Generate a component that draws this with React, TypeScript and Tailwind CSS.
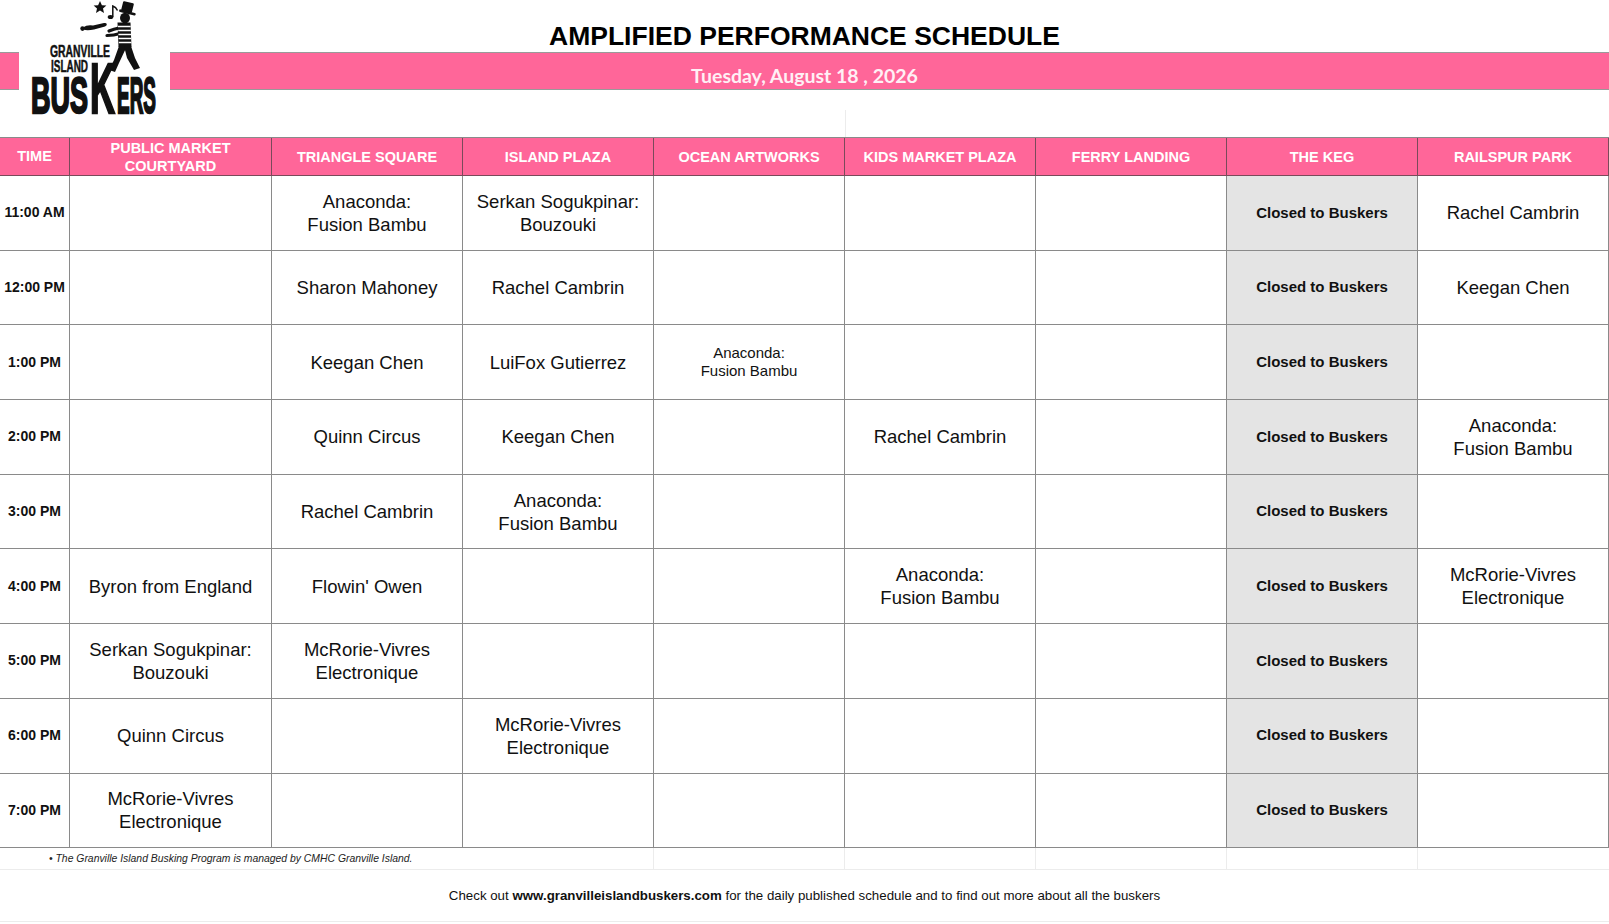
const CLOSED = "__closed__";

type Row = {
  time: string;
  cells: string[];
};

const locations = [
  "PUBLIC MARKET\nCOURTYARD",
  "TRIANGLE SQUARE",
  "ISLAND PLAZA",
  "OCEAN ARTWORKS",
  "KIDS MARKET PLAZA",
  "FERRY LANDING",
  "THE KEG",
  "RAILSPUR PARK",
];

const rows: Row[] = [
  { time: "11:00 AM", cells: ["", "Anaconda:\nFusion Bambu", "Serkan Sogukpinar:\nBouzouki", "", "", "", CLOSED, "Rachel Cambrin"] },
  { time: "12:00 PM", cells: ["", "Sharon Mahoney", "Rachel Cambrin", "", "", "", CLOSED, "Keegan Chen"] },
  { time: "1:00 PM", cells: ["", "Keegan Chen", "LuiFox Gutierrez", "small:Anaconda:\nFusion Bambu", "", "", CLOSED, ""] },
  { time: "2:00 PM", cells: ["", "Quinn Circus", "Keegan Chen", "", "Rachel Cambrin", "", CLOSED, "Anaconda:\nFusion Bambu"] },
  { time: "3:00 PM", cells: ["", "Rachel Cambrin", "Anaconda:\nFusion Bambu", "", "", "", CLOSED, ""] },
  { time: "4:00 PM", cells: ["Byron from England", "Flowin' Owen", "", "", "Anaconda:\nFusion Bambu", "", CLOSED, "McRorie-Vivres\nElectronique"] },
  { time: "5:00 PM", cells: ["Serkan Sogukpinar:\nBouzouki", "McRorie-Vivres\nElectronique", "", "", "", "", CLOSED, ""] },
  { time: "6:00 PM", cells: ["Quinn Circus", "", "McRorie-Vivres\nElectronique", "", "", "", CLOSED, ""] },
  { time: "7:00 PM", cells: ["McRorie-Vivres\nElectronique", "", "", "", "", "", CLOSED, ""] },
];

const logoFont = "'Liberation Sans', Arial, sans-serif";

function Logo() {
  // white box that breaks the pink date bar, with the juggler logo in it
  return (
    <div className="absolute left-[19px] top-0 h-[128px] w-[151px] bg-white">
      <svg width="151" height="128" viewBox="0 0 151 128" className="overflow-visible">
        <polygon
          points="81,1 82.9,5.2 87.4,5.6 84,8.5 85,13 81,10.6 77,13 78,8.5 74.6,5.6 79.1,5.2"
          fill="#111"
        />
        <ellipse cx="91.5" cy="17" rx="2.8" ry="2.1" fill="#111" />
        <path d="M93.8 17 L93.8 6 Q97 7 98.5 10.5" stroke="#111" strokeWidth="1.5" fill="none" />
        <path
          d="M64 27.5 Q68 24.5 74 25.5 L85 23 Q87.5 22.6 87.8 24.2 Q88 25.8 86 26.4 L75 29.5 Q68 31 64 29.5 Z"
          fill="#111"
        />
        <ellipse cx="63.5" cy="28.6" rx="2.2" ry="2.4" fill="#111" />
        <rect x="103" y="2" width="11" height="10" rx="1" fill="#111" transform="rotate(14 108 7)" />
        <rect x="100" y="11" width="17" height="2.6" rx="1.2" fill="#111" transform="rotate(14 108 12)" />
        <ellipse cx="106" cy="18" rx="5" ry="5.2" fill="#111" />
        <path d="M100 28 Q95 29 90 31" stroke="#111" strokeWidth="3.2" strokeLinecap="round" fill="none" />
        <path d="M101 33.5 Q95 35.5 88 35.5" stroke="#111" strokeWidth="3.2" strokeLinecap="round" fill="none" />
        <path d="M98.5 22.5 L111.5 22.5 L112.5 47 L99.5 47 Z" fill="#111" />
        <path
          d="M99 26.5 L111.7 26.5 M99.2 30.5 L111.9 30.5 M99.4 34.5 L112.1 34.5 M99.6 38.5 L112.3 38.5 M99.8 42.5 L112.4 42.5"
          stroke="#fff"
          strokeWidth="1.3"
        />
        <path d="M100 46 L108 46 L100 63 L96 72 L90 70 L95 60 Z" fill="#111" />
        <path d="M105 46 L112 46 L116 58 L121 68 L115 70 L108 58 Z" fill="#111" />
        <text
          x="31"
          y="57"
          textLength="60"
          lengthAdjust="spacingAndGlyphs"
          fontFamily={logoFont}
          fontWeight="700"
          fontSize="16"
          fill="#111"
          stroke="#111"
          strokeWidth="0.5"
        >
          GRANVILLE
        </text>
        <text
          x="32"
          y="72"
          textLength="37"
          lengthAdjust="spacingAndGlyphs"
          fontFamily={logoFont}
          fontWeight="700"
          fontSize="16"
          fill="#111"
          stroke="#111"
          strokeWidth="0.5"
        >
          ISLAND
        </text>
        <text
          x="12"
          y="113"
          textLength="57"
          lengthAdjust="spacingAndGlyphs"
          fontFamily={logoFont}
          fontWeight="700"
          fontSize="50"
          fill="#111"
          stroke="#111"
          strokeWidth="2.4"
        >
          BUS
        </text>
        <text
          x="71"
          y="113"
          textLength="25"
          lengthAdjust="spacingAndGlyphs"
          fontFamily={logoFont}
          fontWeight="700"
          fontSize="70"
          fill="#111"
          stroke="#111"
          strokeWidth="2.4"
        >
          K
        </text>
        <text
          x="98"
          y="113"
          textLength="39"
          lengthAdjust="spacingAndGlyphs"
          fontFamily={logoFont}
          fontWeight="700"
          fontSize="50"
          fill="#111"
          stroke="#111"
          strokeWidth="2.4"
        >
          ERS
        </text>
      </svg>
    </div>
  );
}

function Cell({ value }: { value: string }) {
  if (value === CLOSED) {
    return (
      <div className="flex items-center justify-center border-r border-b border-[#8a8a8a] bg-[#e4e4e4] text-[15px] font-bold text-[#111]">
        Closed to Buskers
      </div>
    );
  }
  const small = value.startsWith("small:");
  const text = small ? value.slice(6) : value;
  return (
    <div
      className={
        small
          ? "flex items-center justify-center whitespace-pre-line border-r border-b border-[#8a8a8a] text-center text-[15px] leading-[18px] text-[#111]"
          : "flex items-center justify-center whitespace-pre-line border-r border-b border-[#8a8a8a] text-center text-[18.5px] leading-[23px] text-[#111]"
      }
    >
      {text}
    </div>
  );
}

export default function App() {
  return (
    <div className="h-[924px] w-[1609px] overflow-hidden bg-white font-['Liberation_Sans',Arial,sans-serif]">
      <div className="relative h-[137px]">
        <div className="flex h-[52px] items-end justify-center pb-[3px]">
          <h1 className="text-[26.5px] font-bold leading-none text-black">
            AMPLIFIED PERFORMANCE SCHEDULE
          </h1>
        </div>
        <div className="flex h-[38px] items-end justify-center border-y border-[#9a9a9a] bg-[#ff6699] pb-[1px]">
          <span className="font-['Lato',sans-serif] text-[19.5px] font-bold leading-[24px] text-[#fff0f5]">
            Tuesday, August 18 , 2026
          </span>
        </div>
        <div className="flex h-[47px] justify-end">
          <div className="mt-[20px] w-[764px] border-l border-[#ececec]" />
        </div>
        <Logo />
      </div>

      <div className="grid grid-cols-[70px_202px_repeat(7,191px)] grid-rows-[38px_repeat(9,74.7px)] border-t border-[#8a8a8a]">
        <div className="flex items-center justify-center border-r border-b border-[#7a4a5a] bg-[#ff6699] text-[14.5px] font-bold text-white">
          TIME
        </div>
        {locations.map((loc) => (
          <div
            key={loc}
            className="flex items-center justify-center whitespace-pre-line border-r border-b border-[#7a4a5a] bg-[#ff6699] text-center text-[14.5px] font-bold leading-[18px] text-white"
          >
            {loc}
          </div>
        ))}
        {rows.map((row) => (
          <>
            <div
              key={row.time}
              className="flex items-center justify-center border-r border-b border-[#8a8a8a] text-[14px] font-bold text-[#111]"
            >
              {row.time}
            </div>
            {row.cells.map((c, i) => (
              <Cell key={row.time + i} value={c} />
            ))}
          </>
        ))}
      </div>

      <div className="grid h-[22px] grid-cols-[70px_202px_repeat(7,191px)] border-b border-[#ececec]">
        <div className="col-span-4 flex items-center border-r border-[#ececec] pl-[49px] text-[10.4px] italic text-[#222]">
          • The Granville Island Busking Program is managed by CMHC Granville Island.
        </div>
        <div className="border-r border-[#ececec]" />
        <div className="border-r border-[#ececec]" />
        <div className="border-r border-[#ececec]" />
        <div className="border-r border-[#ececec]" />
        <div />
      </div>

      <div className="flex h-[52px] items-center justify-center border-b border-[#ececec] text-[13.3px] text-[#111]">
        <span>
          Check out <span className="font-bold">www.granvilleislandbuskers.com</span> for the daily
          published schedule and to find out more about all the buskers
        </span>
      </div>
    </div>
  );
}
